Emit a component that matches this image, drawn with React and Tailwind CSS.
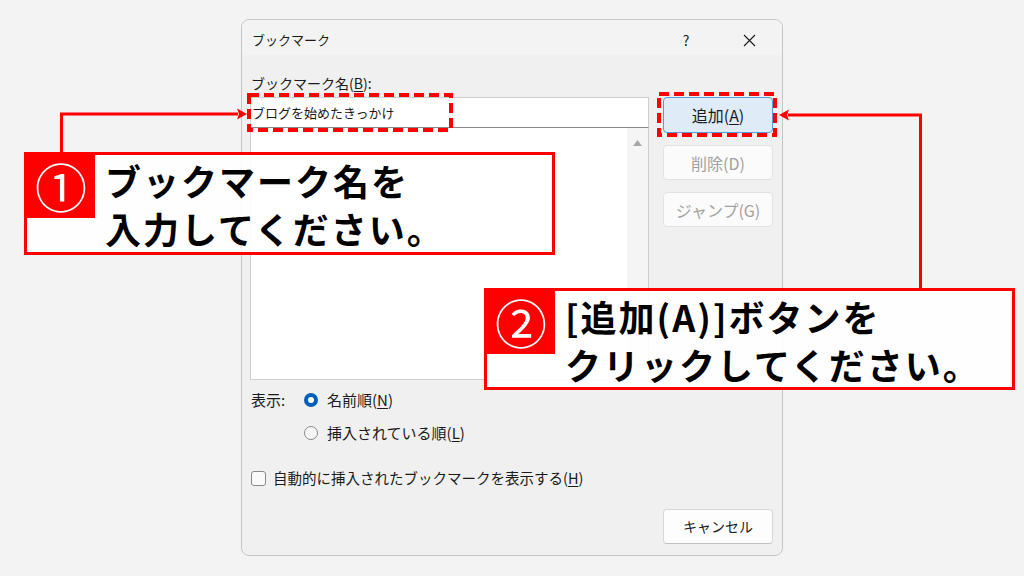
import React from "react";

function Radio({ checked }) {
  if (checked) {
    return (
      <span className="flex h-[14px] w-[14px] items-center justify-center rounded-full bg-[#005fb8]">
        <span className="h-[6px] w-[6px] rounded-full bg-white" />
      </span>
    );
  }
  return <span className="h-[14px] w-[14px] rounded-full border border-[#8a8a8a] bg-[#f6f6f6]" />;
}

function Callout({ num, lines, className }) {
  return (
    <div className={"absolute flex border-[3px] border-[#ff0000] bg-white/90 " + className}>
      <div className="flex h-[63px] w-[68px] shrink-0 items-center justify-center bg-[#ff0000] pb-[1px] text-[52px] leading-none text-white">
        {num}
      </div>
      <div className="ml-[10px] whitespace-nowrap pt-[1px] text-[36px] font-bold leading-[48px] tracking-[2px] text-black">
        {lines[0]}
        <br />
        {lines[1]}
      </div>
    </div>
  );
}

export default function App() {
  return (
    <div className="relative h-[576px] w-[1024px] overflow-hidden bg-[#f3f3f3] font-['Noto_Sans_CJK_JP',sans-serif] text-[#1b1b1b]">
      {/* Dialog */}
      <div className="mx-auto mt-[19px] w-[542px] overflow-hidden rounded-[8px] border border-[#c6c6c6] bg-[#f0f0f0]">
        {/* Title bar */}
        <div className="flex h-[35px] items-start bg-[#f3f3f3] pl-[10px] pt-[11px]">
          <span className="flex-1 text-[13px] leading-[18px]">ブックマーク</span>
          <span className="w-[46px] text-center text-[14px] leading-[18px]">?</span>
          <span className="ml-[17px] flex w-[46px] justify-center pt-[3px]">
            <svg width="13" height="13" viewBox="0 0 13 13">
              <path d="M1 1 L12 12 M12 1 L1 12" stroke="#1b1b1b" strokeWidth="1.1" fill="none" />
            </svg>
          </span>
          <span className="w-[10px]" />
        </div>

        {/* Body */}
        <div className="pb-[11px] pl-[8px] pr-[9px] pt-[18px]">
          <div className="pl-[1px] text-[14px] leading-[20px]">
            ブックマーク名(<span className="underline underline-offset-2">B</span>):
          </div>
          <div className="mt-[4px] flex gap-[14px]">
            <div className="w-[399px]">
              <div className="h-[31px] border border-[#cfcfcf] border-b-[#8a8a8a] bg-white pl-[1px] text-[13px] leading-[29px]">
                ブログを始めたきっかけ
              </div>
              <div className="flex h-[252px] border border-t-0 border-[#cfcfcf] bg-white">
                <div className="flex-1" />
                <div className="flex w-[21px] flex-col items-center justify-between bg-[#f5f5f5] pb-[9px] pt-[12px]">
                  <svg width="9" height="6" viewBox="0 0 9 6">
                    <path d="M4.5 0 L9 6 L0 6 Z" fill="#a6a6a6" />
                  </svg>
                  <svg width="9" height="6" viewBox="0 0 9 6">
                    <path d="M0 0 L9 0 L4.5 6 Z" fill="#d0d0d0" />
                  </svg>
                </div>
              </div>
            </div>
            <div className="flex w-[110px] flex-col gap-[12px]">
              <div className="flex h-[36px] items-center justify-center rounded-[4px] border border-[#5a9bd8] bg-[#dfebf7] text-[16px]">
                追加(<span className="underline underline-offset-2">A</span>)
              </div>
              <div className="flex h-[35px] items-center justify-center rounded-[4px] border border-[#e2e2e2] bg-[#fbfbfb] text-[16px] text-[#a0a0a0]">
                削除(D)
              </div>
              <div className="flex h-[35px] items-center justify-center rounded-[4px] border border-[#e2e2e2] bg-[#fbfbfb] text-[16px] text-[#a0a0a0]">
                ジャンプ(G)
              </div>
            </div>
          </div>

          <div className="mt-[10px] flex text-[15px] leading-[20px]">
            <div className="w-[54px] pl-[1px]">表示:</div>
            <div className="flex flex-col gap-[13px]">
              <div className="flex h-[20px] items-center">
                <Radio checked />
                <span className="ml-[9px]">
                  名前順(<span className="underline underline-offset-2">N</span>)
                </span>
              </div>
              <div className="flex h-[20px] items-center">
                <Radio />
                <span className="ml-[9px]">
                  挿入されている順(<span className="underline underline-offset-2">L</span>)
                </span>
              </div>
            </div>
          </div>

          <div className="mt-[25px] flex h-[20px] items-center text-[14.5px] leading-[20px]">
            <span className="ml-[1px] h-[15px] w-[15px] rounded-[3px] border border-[#8a8a8a] bg-[#fafafa]" />
            <span className="ml-[7px]">
              自動的に挿入されたブックマークを表示する(<span className="underline underline-offset-2">H</span>)
            </span>
          </div>

          <div className="mt-[21px] flex justify-end">
            <div className="flex h-[35px] w-[110px] items-center justify-center rounded-[4px] border border-[#d6d6d6] border-b-[#c2c2c2] bg-[#fdfdfd] text-[14px]">
              キャンセル
            </div>
          </div>
        </div>
      </div>

      {/* Annotation overlay: connectors and dashed highlights */}
      <svg className="pointer-events-none absolute left-0 top-0" width="1024" height="576" viewBox="0 0 1024 576">
        <rect x="249" y="95" width="202" height="35" fill="none" stroke="#ff0000" strokeWidth="4" strokeDasharray="10 5" />
        <rect x="659" y="94" width="116" height="41" fill="none" stroke="#ff0000" strokeWidth="4" strokeDasharray="10 5" />
        <polyline points="61.5,153 61.5,114 238,114" fill="none" stroke="#ff0000" strokeWidth="3" />
        <path d="M247 114 L237 108.5 L239 114 L237 119.5 Z" fill="#ff0000" />
        <polyline points="920.5,289 920.5,115 788,115" fill="none" stroke="#ff0000" strokeWidth="3" />
        <path d="M779 115 L789 109.5 L787 115 L789 120.5 Z" fill="#ff0000" />
      </svg>

      <Callout num="①" lines={["ブックマーク名を", "入力してください。"]} className="left-[24px] top-[152px] h-[103px] w-[531px]" />
      <Callout num="②" lines={["[追加(A)]ボタンを", "クリックしてください。"]} className="left-[484px] top-[288px] h-[102px] w-[531px]" />
    </div>
  );
}
